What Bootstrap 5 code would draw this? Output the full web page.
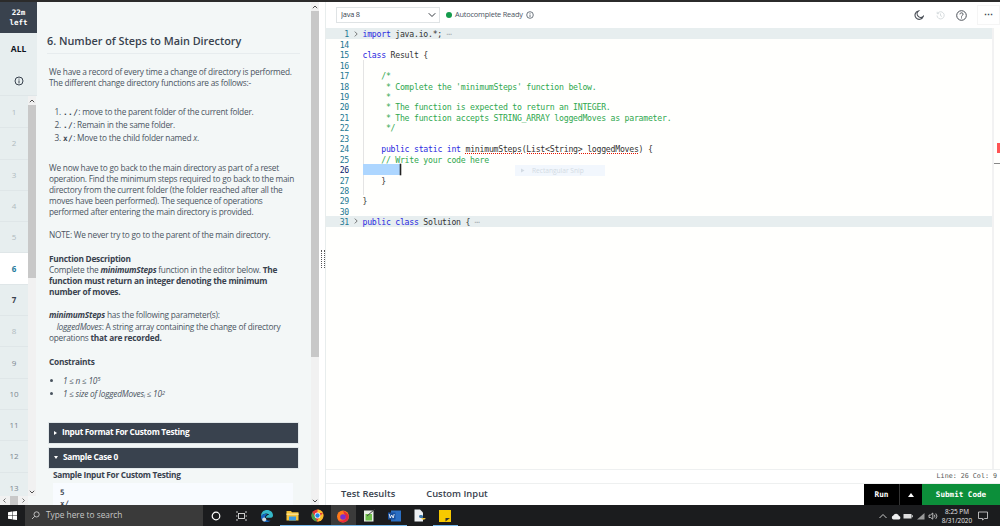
<!DOCTYPE html>
<html lang="en">
<head>
<meta charset="UTF-8">
<meta name="viewport" content="width=device-width, initial-scale=1">
<title>Number of Steps to Main Directory</title>
<link href="https://cdn.jsdelivr.net/npm/bootstrap@5.3.0/dist/css/bootstrap.min.css" rel="stylesheet">
<style>
html, body { height: 526px; overflow: hidden; }
body { background: #fff; font-family: "Open Sans", sans-serif; font-size: 8.3px; color: #39424e; }
.topline { height: 2px; background: #2b2b2b; }
.app { height: 503px; }
.mono { font-family: "DejaVu Sans Mono", monospace; }

/* question rail */
.rail { width: 37px; background: #f3f7f7; flex: none; }
.timer { height: 31px; background: #39424e; color: #fff; font-size: 7.5px; font-weight: 700; line-height: 9.5px; }
.rail-top { height: 63px; background: #e7eeef; border-bottom: 1px solid #dfe6e8; padding-top: 1px; }
.rail-all { height: 31px; font-weight: 700; font-size: 8.5px; color: #0e141e; }
.rail-info { height: 31px; }
.rail-body { height: 400px; overflow: hidden; }
.q-list { width: 28px; background: #e7eeef; overflow: hidden; padding-top: 1px; }
.q-item { height: 31.3px; flex: none; font-size: 8px; color: #b0bbc0; border-bottom: 1px solid #dfe6e8; }
.q-item.done { color: #39424e; font-weight: 700; }
.q-item.cur { background: #fff; color: #1f7a9c; font-weight: 700; }
.q-item.dark { color: #7b8791; }
.sb-v { width: 8px; background: #f1f1f1; flex: none; }
.sb-arrow { height: 9px; flex: none; }
.sb-thumb { background: #c8c8c8; flex: none; }
.sb-h { height: 9px; width: 28px; background: #f1f1f1; padding-left: 3px; gap: 4px; }
.sb-h-thumb { width: 8px; height: 9px; background: #c8c8c8; }

/* statement */
.stmt { width: 274px; background: #f3f7f7; flex: none; overflow: hidden; padding: 0 13px 0 10px; }
.stmt-title { margin: 32px 0 0; padding-bottom: 6px; font-size: 10.85px; font-weight: 600; color: #39424e; border-bottom: 1px solid #e7ecee; line-height: 13px; width: 253px; }
.stmt-text { padding: 11.5px 0 0 2px; line-height: 11px; color: #4a545f; width: 250px; letter-spacing: -.23px; }
.stmt-text p { margin: 0 0 12.5px; }
.stmt-text b, .stmt-text h6 { color: #39424e; font-weight: 700; }
.stmt-text h6 { font-size: 8.3px; margin: 0; line-height: 11px; letter-spacing: -.23px; }
.stmt-text ol { margin: 17px 0 18px; padding-left: 14px; }
.stmt-text ol li { line-height: 13px; }
.stmt-text ul { margin: 7px 0 0; padding-left: 14px; }
.stmt-text ul li { line-height: 13.5px; font-style: italic; }
.stmt-text sup { font-size: 6px; top: -.4em; line-height: 0; }
.stmt-text sub { font-size: 5px; line-height: 0; }
.stmt-text code { color: #39424e; font-size: 7.8px; font-weight: 700; letter-spacing: .4px; line-height: 0; }
.stmt-text .logged { margin-top: 1px; }
.fold { height: 20px; width: 249px; margin: 5px 0 0 2px; background: #39424e; color: #fff; font-weight: 700; font-size: 8.3px; letter-spacing: -.3px; padding-left: 5px; gap: 5px; box-shadow: 0 0 0 1px #e2e8ea; }
.fold.first { margin-top: 22px; }
.tri-r { width: 0; height: 0; border-left: 3.5px solid #fff; border-top: 2.5px solid transparent; border-bottom: 2.5px solid transparent; }
.tri-d { width: 0; height: 0; border-top: 3.5px solid #fff; border-left: 2.5px solid transparent; border-right: 2.5px solid transparent; }
.sample-h { font-weight: 700; margin: 1px 0 3px 6px; font-size: 8.3px; letter-spacing: -.3px; color: #39424e; line-height: 11px; }
.sample-box { background: #f8fbff; margin-left: 6px; width: 240px; padding: 4px 7px; font-size: 7.5px; line-height: 11px; font-weight: 700; color: #39424e; height: 40px; }

/* splitter */
.splitter { width: 6px; flex: none; background: #fff; padding-top: 11px; }
.grip { width: 4px; height: 18px; margin-left: 2px; border-left: 1px dotted #555; border-right: 1px dotted #555; }

/* editor */
.editor-col { border-left: 1px solid #e8eded; min-width: 0; }
.toolbar { height: 26px; flex: none; padding: 5px 0 5px 10px; }
.lang-select { width: 104px; height: 16px; padding: 0 0 0 4px; font-size: 7.4px; letter-spacing: -.2px; color: #39424e; border: 1.5px solid #dfe3e5; border-radius: 0; background-size: 8px 8px; background-position: right 3px center; }
.ready { font-size: 7.4px; letter-spacing: -.2px; color: #4a545f; margin-left: 6px; gap: 3px; }
.ready-dot { width: 6px; height: 6px; border-radius: 50%; background: #149b4c; }
.tool-ico { width: 21px; }
.more-btn { width: 23px; height: 20px; margin-left: 5.5px; border: 1px solid #f5f5f5; color: #39424e; font-weight: 700; font-size: 9px; }
.code-area { height: 441px; flex: none; background: #fffffd; position: relative; overflow: hidden; }
.code-main { flex: 1; padding-top: .4px; }
.code-line { height: 10.45px; line-height: 12px; font-size: 8.2px; letter-spacing: -.25px; white-space: pre; }
.code-line.folded { background: #e7eeef; }
.ln { width: 23px; text-align: right; color: #237893; flex: none; }
.fold-mark { width: 13.5px; flex: none; }
.kw { color: #2a2ae0; }
.cm { color: #2fa84f; }
.tx { color: #333; }
.squig { text-decoration: underline dotted #e51400 1px; text-underline-offset: 1px; }
.guide { box-shadow: inset 1px 0 0 #e4e4e4; }
.sel { background: #add6ff; width: 37px; height: 10.45px; flex: none; }
.cursor { width: 1px; height: 10.45px; background: #222; box-shadow: 0 0 0 .3px #222; flex: none; }
.minimap { width: 8px; flex: none; background: #fffffd; border-left: 2px solid #f2f2f2; }
.mark-red { height: 10px; width: 3.5px; margin: 115px 0 0 2.5px; background: #f55; }
.mark-gray { height: 1px; width: 7px; margin: 10px 0 0; background: #888; }
.snip { position: absolute; left: 189px; top: 137px; width: 90px; height: 11px; background: #f2f7fd; color: #d3dbe3; font-size: 6.6px; line-height: 11px; padding-left: 5px; gap: 7px; font-family: "Open Sans", sans-serif; }
.status { height: 15px; flex: none; border-top: 1px solid #eef0f0; border-bottom: 1px solid #eef0f0; font-size: 6.7px; color: #555; padding-right: 3px; }
.actions { height: 21px; flex: none; }
.tab-lbl { font-size: 9.4px; font-weight: 600; color: #39424e; }
.tab-lbl.first { margin-left: 15px; }
.tab-lbl.second { margin-left: 31px; }
.run-btn { background: #000; color: #fff; border: 0; border-radius: 0; width: 36px; height: 21px; font-size: 7.75px; font-weight: 700; padding: 0; border-right: 1px solid #333; }
.up-btn { background: #000; border: 0; border-radius: 0; width: 22px; height: 21px; padding: 0; }
.tri-u { width: 0; height: 0; border-bottom: 4px solid #fff; border-left: 3.5px solid transparent; border-right: 3.5px solid transparent; }
.submit-btn { background: #0c8f3a; color: #fff; border: 0; border-radius: 0; width: 78px; height: 21px; font-size: 7.6px; font-weight: 700; padding: 0; font-family: "DejaVu Sans Mono", monospace; }

/* windows taskbar */
.taskbar { height: 21px; background: #1b1c1e; color: #fff; }
.tb-start { width: 25px; flex: none; }
.tb-search { width: 178px; height: 21px; background: #3a3a3a; flex: none; font-size: 8.3px; color: #c8c8c8; padding-left: 6px; gap: 6px; }
.tb-app { width: 25.5px; height: 21px; flex: none; }
.tb-app.active { background: #3b3b3b; box-shadow: inset 0 -1px 0 #76b9ed; }
.tb-app.run { box-shadow: inset 0 -1px 0 #76b9ed; }
.tb-tray { gap: 2.5px; padding-right: 10px; }
.tb-clock { font-size: 6.4px; line-height: 9px; text-align: center; width: 38px; margin-left: -2.5px; margin-right: -2.5px; color: #e8e8e8; }
.tb-notify { width: 14px; }
</style>
</head>
<body>
<div class="topline"></div>
<div class="app d-flex">

  <div class="rail d-flex flex-column">
    <div class="timer mono d-flex align-items-center justify-content-center text-center">22m<br>left</div>
    <div class="rail-top">
      <div class="rail-all d-flex align-items-center justify-content-center">ALL</div>
      <div class="rail-info d-flex align-items-center justify-content-center">
        <svg width="10" height="10" viewBox="0 0 10 10" fill="none" stroke="#39424e"><circle cx="5" cy="5" r="4"/><path d="M5 4.4V7.4M5 2.6V3.6"/></svg>
      </div>
    </div>
    <div class="rail-body d-flex">
      <div class="q-list d-flex flex-column">
        <div class="q-item d-flex align-items-center justify-content-center">1</div>
        <div class="q-item d-flex align-items-center justify-content-center">2</div>
        <div class="q-item d-flex align-items-center justify-content-center">3</div>
        <div class="q-item d-flex align-items-center justify-content-center">4</div>
        <div class="q-item d-flex align-items-center justify-content-center">5</div>
        <div class="q-item cur d-flex align-items-center justify-content-center">6</div>
        <div class="q-item done d-flex align-items-center justify-content-center">7</div>
        <div class="q-item d-flex align-items-center justify-content-center">8</div>
        <div class="q-item dark d-flex align-items-center justify-content-center">9</div>
        <div class="q-item dark d-flex align-items-center justify-content-center">10</div>
        <div class="q-item dark d-flex align-items-center justify-content-center">11</div>
        <div class="q-item dark d-flex align-items-center justify-content-center">12</div>
        <div class="q-item dark d-flex align-items-center justify-content-center">13</div>
      </div>
      <div class="sb-v d-flex flex-column">
        <div class="sb-arrow d-flex align-items-center justify-content-center"><svg width="6" height="4" viewBox="0 0 6 4" fill="none" stroke="#505050"><path d="M.8 3.2 3 1 5.200 3.2"/></svg></div>
        <div class="sb-thumb" style="height:173px"></div>
        <div class="flex-grow-1"></div>
        <div class="sb-arrow d-flex align-items-center justify-content-center"><svg width="6" height="4" viewBox="0 0 6 4" fill="none" stroke="#505050"><path d="M.8 .8 3 3 5.200 .8"/></svg></div>
      </div>
    </div>
    <div class="sb-h d-flex align-items-center">
      <svg width="3" height="5" viewBox="0 0 3 5" fill="none" stroke="#505050" stroke-width=".8"><path d="M2.500 .5 .5 2.500 2.500 4.500"/></svg>
      <span class="sb-h-thumb"></span>
      <svg width="3" height="5" viewBox="0 0 3 5" fill="none" stroke="#505050" stroke-width=".8"><path d="M.5 .5 2.500 2.500 .5 4.500"/></svg>
    </div>
  </div>

  <div class="stmt">
    <h1 class="stmt-title">6. Number of Steps to Main Directory</h1>
    <div class="stmt-text">
      <p class="mb-0">We have a record of every time a change of directory is performed. The different change directory functions are as follows:-</p>
      <ol>
        <li><code class="mono">../</code>: move to the parent folder of the current folder.</li>
        <li><code class="mono">./</code>: Remain in the same folder.</li>
        <li><code class="mono">x/</code>: Move to the child folder named <i>x</i>.</li>
      </ol>
      <p>We now have to go back to the main directory as part of a reset operation. Find the minimum steps required to go back to the main directory from the current folder (the folder reached after all the moves have been performed). The sequence of operations performed after entering the main directory is provided.</p>
      <p>NOTE: We never try to go to the parent of the main directory.</p>
      <h6>Function Description</h6>
      <p>Complete the <b><i>minimumSteps</i></b> function in the editor below. <b>The function must return an integer denoting the minimum number of moves.</b></p>
      <p class="mb-0"><b><i>minimumSteps</i></b> has the following parameter(s):</p>
      <p class="logged">&nbsp;&nbsp;&nbsp;&nbsp;<i>loggedMoves</i>: A string array containing the change of directory operations <b>that are recorded.</b></p>
      <h6>Constraints</h6>
      <ul>
        <li>1 ≤ n ≤ 10<sup>5</sup></li>
        <li>1 ≤ size of loggedMoves<sub>i</sub> ≤ 10<sup>2</sup></li>
      </ul>
    </div>
    <div class="fold first d-flex align-items-center"><span class="tri-r"></span>Input Format For Custom Testing</div>
    <div class="fold d-flex align-items-center"><span class="tri-d"></span>Sample Case 0</div>
    <div class="sample-h">Sample Input For Custom Testing</div>
    <div class="sample-box mono">5<br>x/</div>
  </div>

  <div class="sb-v d-flex flex-column">
    <div class="sb-arrow d-flex align-items-center justify-content-center"><svg width="6" height="4" viewBox="0 0 6 4" fill="none" stroke="#505050"><path d="M.8 3.2 3 1 5.200 3.2"/></svg></div>
    <div class="sb-thumb" style="height:346px"></div>
    <div class="flex-grow-1"></div>
    <div class="sb-arrow d-flex align-items-center justify-content-center"><svg width="6" height="4" viewBox="0 0 6 4" fill="none" stroke="#505050"><path d="M.8 .8 3 3 5.200 .8"/></svg></div>
  </div>
  <div class="splitter d-flex align-items-center"><div class="grip"></div></div>

  <div class="editor-col flex-grow-1 d-flex flex-column">
    <div class="toolbar d-flex align-items-center">
      <select class="form-select lang-select"><option>Java 8</option></select>
      <div class="ready d-flex align-items-center">
        <span class="ready-dot"></span><span>Autocomplete Ready</span>
        <svg width="8" height="8" viewBox="0 0 8 8" fill="none" stroke="#4a545f" stroke-width=".8"><circle cx="4" cy="4" r="3.3"/><path d="M4 3.500V6M4 2V2.800"/></svg>
      </div>
      <div class="ms-auto d-flex align-items-center">
        <span class="tool-ico d-flex justify-content-center"><svg width="10" height="10" viewBox="0 0 10 10" fill="none" stroke="#4a4f57" stroke-width="1.1"><path d="M4.400 1A4.200 4.200 0 1 0 9.200 6.500 3.600 3.600 0 0 1 4.400 1Z"/></svg></span>
        <span class="tool-ico d-flex justify-content-center"><svg width="9" height="9" viewBox="0 0 9 9" fill="none" stroke="#d3d8da" stroke-width=".9"><path d="M1.500 2.500A3.600 3.600 0 1 1 1 4.500M1.200 .8V2.700H3.100M4.500 2.500V4.700L6 5.500"/></svg></span>
        <span class="tool-ico d-flex justify-content-center"><svg width="11" height="11" viewBox="0 0 11 11" fill="none" stroke="#4a4f57"><circle cx="5.500" cy="5.500" r="4.800"/><path d="M3.900 4.300C3.900 2.400 7.100 2.400 7.100 4.200 7.100 5.300 5.500 5.400 5.500 6.600M5.500 7.400V8.400"/></svg></span>
        <div class="more-btn d-flex align-items-center justify-content-center">⋯</div>
      </div>
    </div>

    <div class="code-area d-flex">
      <div class="code-main mono">
        <div class="code-line folded d-flex"><span class="ln">1</span><span class="fold-mark d-flex align-items-center justify-content-center"><svg width="4" height="6" viewBox="0 0 4 6" fill="none" stroke="#555" stroke-width=".8"><path d="M.8 .6 3.200 3 .8 5.400"/></svg></span><span class="tx"><span class="kw">import</span> java.io.*; <span class="text-secondary opacity-50">⋯</span></span></div>
        <div class="code-line d-flex"><span class="ln">14</span></div>
        <div class="code-line d-flex"><span class="ln">15</span><span class="fold-mark"></span><span class="tx"><span class="kw">class</span> Result {</span></div>
        <div class="code-line d-flex"><span class="ln">16</span><span class="fold-mark"></span><span class="guide flex-grow-1"></span></div>
        <div class="code-line d-flex"><span class="ln">17</span><span class="fold-mark"></span><span class="guide cm">    /*</span></div>
        <div class="code-line d-flex"><span class="ln">18</span><span class="fold-mark"></span><span class="guide cm">     * Complete the 'minimumSteps' function below.</span></div>
        <div class="code-line d-flex"><span class="ln">19</span><span class="fold-mark"></span><span class="guide cm">     *</span></div>
        <div class="code-line d-flex"><span class="ln">20</span><span class="fold-mark"></span><span class="guide cm">     * The function is expected to return an INTEGER.</span></div>
        <div class="code-line d-flex"><span class="ln">21</span><span class="fold-mark"></span><span class="guide cm">     * The function accepts STRING_ARRAY loggedMoves as parameter.</span></div>
        <div class="code-line d-flex"><span class="ln">22</span><span class="fold-mark"></span><span class="guide cm">     */</span></div>
        <div class="code-line d-flex"><span class="ln">23</span><span class="fold-mark"></span><span class="guide flex-grow-1"></span></div>
        <div class="code-line d-flex"><span class="ln">24</span><span class="fold-mark"></span><span class="guide tx">    <span class="kw">public</span> <span class="kw">static</span> <span class="kw">int</span> <span class="squig">minimumSteps(List&lt;String&gt; loggedMoves)</span> {</span></div>
        <div class="code-line d-flex"><span class="ln">25</span><span class="fold-mark"></span><span class="guide cm">    // Write your code here</span></div>
        <div class="code-line d-flex"><span class="ln" style="color:#0b216f">26</span><span class="fold-mark"></span><span class="sel"></span><span class="cursor"></span></div>
        <div class="code-line d-flex"><span class="ln">27</span><span class="fold-mark"></span><span class="guide tx">    }</span></div>
        <div class="code-line d-flex"><span class="ln">28</span><span class="fold-mark"></span><span class="guide flex-grow-1"></span></div>
        <div class="code-line d-flex"><span class="ln">29</span><span class="fold-mark"></span><span class="tx">}</span></div>
        <div class="code-line d-flex"><span class="ln">30</span></div>
        <div class="code-line folded d-flex"><span class="ln">31</span><span class="fold-mark d-flex align-items-center justify-content-center"><svg width="4" height="6" viewBox="0 0 4 6" fill="none" stroke="#555" stroke-width=".8"><path d="M.8 .6 3.200 3 .8 5.400"/></svg></span><span class="tx"><span class="kw">public</span> <span class="kw">class</span> Solution { <span class="text-secondary opacity-50">⋯</span></span></div>
      </div>
      <div class="minimap">
        <div class="mark-red"></div>
        <div class="mark-gray"></div>
      </div>
      <div class="snip d-flex align-items-center">
        <svg width="5" height="5" viewBox="0 0 5 5" fill="#d3dbe3"><path d="M1 .5 4.500 2.500 1 4.500Z"/></svg>
        <span>Rectangular Snip</span>
      </div>
    </div>

    <div class="status mono d-flex align-items-center justify-content-end">Line: 26 Col: 9</div>

    <div class="actions d-flex align-items-center">
      <span class="tab-lbl first">Test Results</span>
      <span class="tab-lbl second">Custom Input</span>
      <div class="ms-auto d-flex">
        <button class="btn run-btn mono" type="button">Run</button>
        <button class="btn up-btn d-flex align-items-center justify-content-center" type="button"><span class="tri-u"></span></button>
        <button class="btn submit-btn" type="button">Submit Code</button>
      </div>
    </div>
  </div>
</div>

<div class="taskbar d-flex align-items-center">
  <div class="tb-start d-flex align-items-center justify-content-center">
    <svg width="9" height="9" viewBox="0 0 9 9" fill="#fff"><path d="M0 1.200 4 .6V4.200H0ZM4.500 .5 9 0V4.200H4.500ZM0 4.700H4V8.300L0 7.800ZM4.500 4.700H9V9L4.500 8.400Z"/></svg>
  </div>
  <div class="tb-search d-flex align-items-center">
    <svg width="9" height="9" viewBox="0 0 9 9" fill="none" stroke="#ddd" stroke-width=".8"><circle cx="5.600" cy="3.400" r="2.600"/><path d="M3.700 5.300 1 8"/></svg>
    <span>Type here to search</span>
  </div>
  <div class="tb-app d-flex align-items-center justify-content-center">
    <svg width="10" height="10" viewBox="0 0 10 10" fill="none" stroke="#fff" stroke-width="1.2"><circle cx="5" cy="5" r="3.800"/></svg>
  </div>
  <div class="tb-app d-flex align-items-center justify-content-center">
    <svg width="11" height="10" viewBox="0 0 11 10" fill="none" stroke="#ddd" stroke-width=".9"><rect x="2.500" y="2.500" width="6" height="5"/><path d="M0 1H2M9 1H11M0 5H1.500M9.500 5H11M0 9H2M9 9H11"/></svg>
  </div>
  <div class="tb-app d-flex align-items-center justify-content-center">
    <svg width="14" height="14" viewBox="0 0 14 14"><path d="M1 7.500C1 3 4 1 7 1c3.500 0 6 2.400 6 5.400 0 1.600-1.200 2.400-3 2.400H6C6 6 8.500 5.500 9.500 6.500 8.500 4 4 3.500 1 7.500Z" fill="#35b8c9"/><path d="M1 7.500C.8 11 3.500 13 6.500 13 8 13 9.500 12.500 10.500 11.500 8 12 5 11 5 8.500 5 6.500 6.500 5.500 7.500 5 4.500 4.500 2 5.500 1 7.500Z" fill="#1565c0"/><circle cx="4.200" cy="10.500" r="2" fill="#cfd8dc"/></svg>
  </div>
  <div class="tb-app run d-flex align-items-center justify-content-center">
    <svg width="13" height="11" viewBox="0 0 13 11"><path d="M.5 1H5L6 2.200H12.500V10.500H.5Z" fill="#f5c33b"/><rect x=".5" y="3.500" width="12" height="1.500" fill="#fbe08a"/><rect x="3" y="6.500" width="7" height="4" fill="#3d9be0"/></svg>
  </div>
  <div class="tb-app run d-flex align-items-center justify-content-center">
    <svg width="13" height="13" viewBox="0 0 13 13"><circle cx="6.500" cy="6.500" r="6" fill="#e53935"/><path d="M6.500 .5A6 6 0 0 1 11.900 4H6.500Z" fill="#fbc02d"/><path d="M11.900 4A6 6 0 0 1 6 12.500L8.800 7.500Z" fill="#fbc02d"/><path d="M1.400 3.300 4 7.800 6 12.500A6 6 0 0 1 1.400 3.300Z" fill="#43a047"/><circle cx="6.500" cy="6.500" r="2.900" fill="#fff"/><circle cx="6.500" cy="6.500" r="2.200" fill="#1e88e5"/></svg>
  </div>
  <div class="tb-app active d-flex align-items-center justify-content-center">
    <svg width="14" height="14" viewBox="0 0 14 14"><circle cx="7" cy="7.500" r="6" fill="#ff7a1a"/><path d="M7 1.500C9 3 11.500 4 12.800 7 13 10 10.500 13.500 7 13.500 5 13.500 3 12.500 2 11 4 12 8 12 9.500 9.500 10 7 8 5 7 1.500Z" fill="#e8283e"/><circle cx="7" cy="8" r="2.800" fill="#7b2fd0"/></svg>
  </div>
  <div class="tb-app run d-flex align-items-center justify-content-center">
    <svg width="12" height="13" viewBox="0 0 12 13"><rect x="1" y="1.500" width="9.500" height="11" fill="#e9efe6"/><rect x="2.500" y="5" width="6.500" height="6.500" fill="#6fbf4b"/><path d="M4 7 11.500 .5" stroke="#444"/></svg>
  </div>
  <div class="tb-app run d-flex align-items-center justify-content-center">
    <svg width="13" height="12" viewBox="0 0 13 12"><rect x="3" y=".5" width="10" height="11" fill="#2b6fc4"/><rect x="0" y="2.500" width="7.500" height="7" fill="#174f9e"/><path d="M1.200 4 2.200 8 3.700 5 5.200 8 6.200 4" fill="none" stroke="#fff" stroke-width=".8"/></svg>
  </div>
  <div class="tb-app d-flex align-items-center justify-content-center">
    <svg width="13" height="13" viewBox="0 0 13 13"><path d="M1.500 .5H7L10 3.500V12.500H1.500Z" fill="#eef1f4"/><path d="M6 7c0-1.500 4-1.500 4 0V9H7.500C6.500 9 6 8 6 7Z" fill="#3d77a8"/><path d="M12.500 9.500c0 1.500-4 1.500-4 0V9H11c1 0 1.500-.5 1.500 .5Z" fill="#f1c53c"/></svg>
  </div>
  <div class="tb-app run d-flex align-items-center justify-content-center">
    <svg width="12" height="12" viewBox="0 0 12 12"><rect width="12" height="12" fill="#f7c900"/><path d="M6.500 11.500V8H11Z" fill="#333"/></svg>
  </div>
  <div class="tb-tray ms-auto d-flex align-items-center">
    <svg width="10" height="8" viewBox="0 0 10 8" fill="none" stroke="#ddd" stroke-width=".9"><path d="M1.500 6 5 2.500 8.500 6"/></svg>
    <svg width="10" height="8" viewBox="0 0 10 8" fill="#eee"><path d="M2.500 7.500A2 2 0 0 1 2.300 3.600 3 3 0 0 1 8 4 1.800 1.800 0 0 1 8 7.500Z"/></svg>
    <svg width="10" height="8" viewBox="0 0 10 8" fill="#ddd"><rect x=".5" y="2" width="8" height="4.500"/><rect x="8.800" y="3.200" width="1" height="2"/></svg>
    <svg width="10" height="8" viewBox="0 0 10 8" fill="#999"><path d="M1 7.500 8.500 1V7.500Z"/></svg>
    <svg width="10" height="8" viewBox="0 0 10 8" fill="none" stroke="#ddd" stroke-width=".8"><path d="M1 3V5.500H2.500L4.800 7.200V1L2.500 3ZM6.300 2.800A2 2 0 0 1 6.300 5.500M7.800 1.500A4 4 0 0 1 7.800 6.800"/></svg>
    <div class="tb-clock"><div>8:25 PM</div><div>8/31/2020</div></div>
    <div class="tb-notify d-flex align-items-center justify-content-center">
      <svg width="10" height="10" viewBox="0 0 10 10" fill="none" stroke="#ddd" stroke-width=".8"><path d="M.5 1H9.500V7.500H6.500L4.500 9V7.500H.5Z"/></svg>
    </div>
  </div>
</div>
<script src="https://cdn.jsdelivr.net/npm/bootstrap@5.3.0/dist/js/bootstrap.bundle.min.js"></script>
</body>
</html>
